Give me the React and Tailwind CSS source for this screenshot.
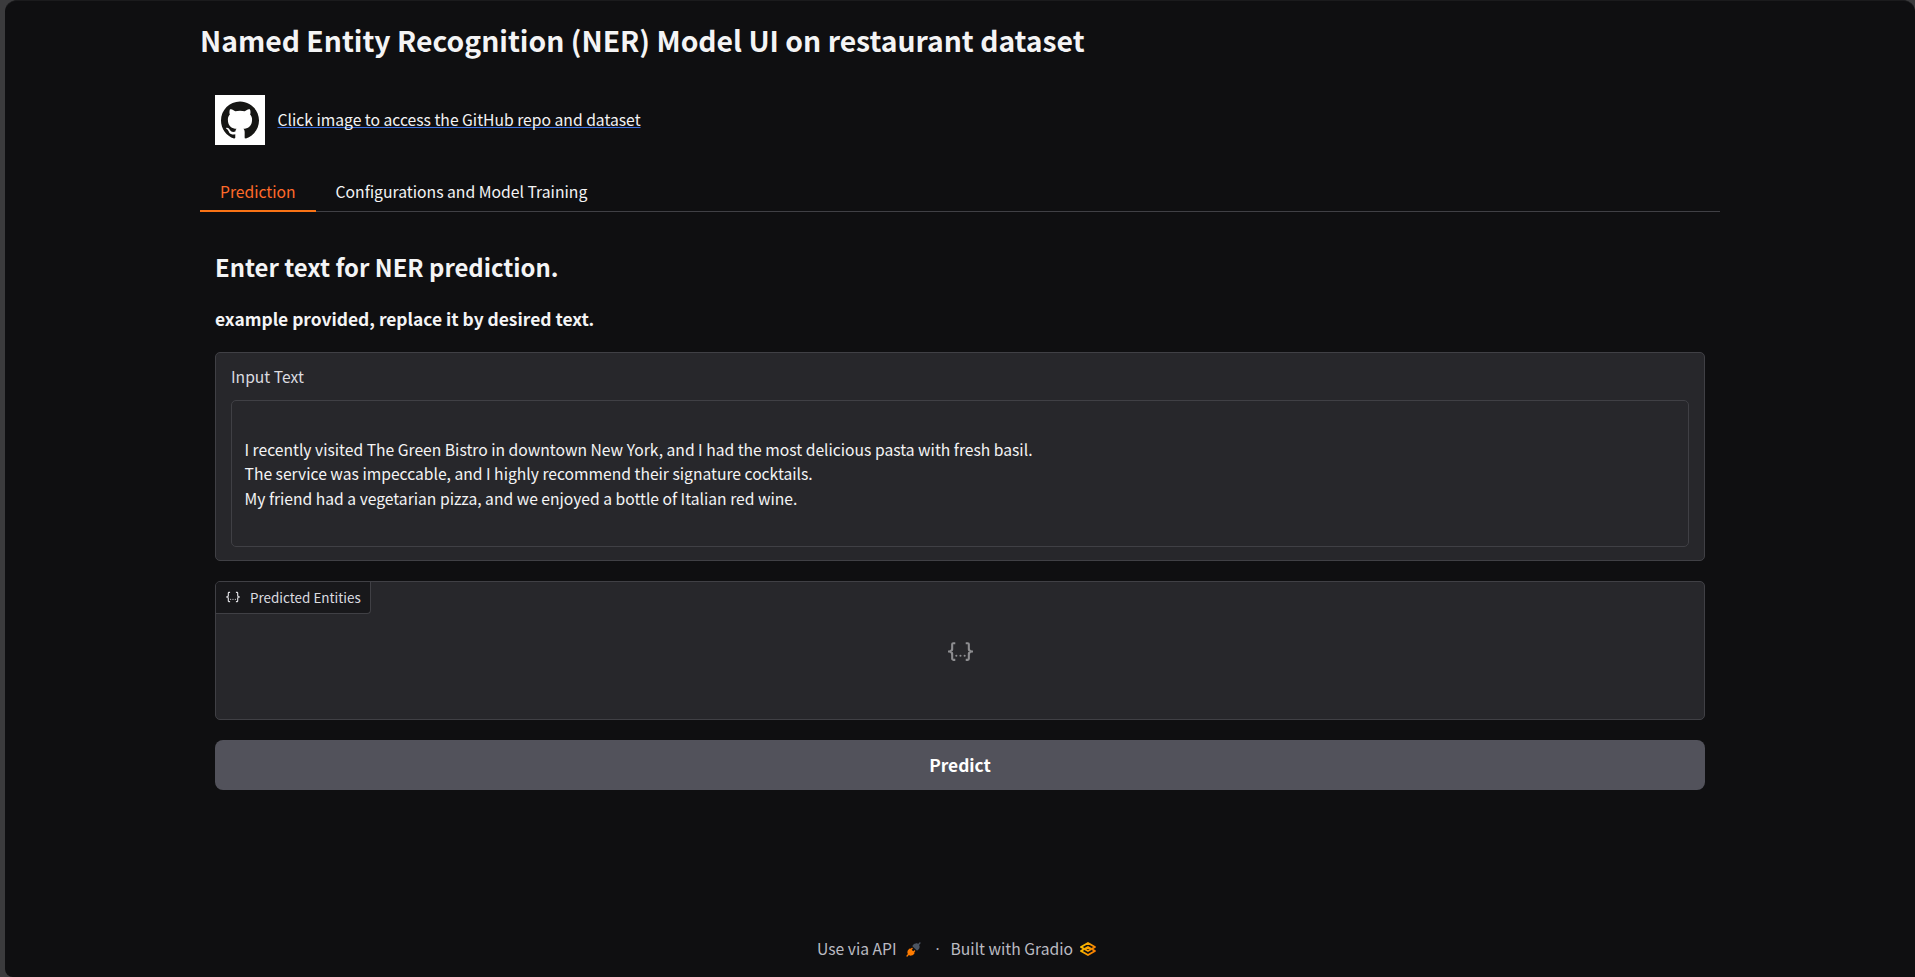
import { SiGithub } from 'react-icons/si';

const SAMPLE_TEXT = `
I recently visited The Green Bistro in downtown New York, and I had the most delicious pasta with fresh basil.
The service was impeccable, and I highly recommend their signature cocktails.
My friend had a vegetarian pizza, and we enjoyed a bottle of Italian red wine.
`;

function JsonIcon({ className }) {
  return (
    <svg viewBox="0 0 24 24" fill="currentColor" className={className}>
      <path d="M5 3h2v2H5v5a2 2 0 0 1-2 2a2 2 0 0 1 2 2v5h2v2H5c-1.07-.27-2-.9-2-2v-4a2 2 0 0 0-2-2H0v-2h1a2 2 0 0 0 2-2V5a2 2 0 0 1 2-2m14 0a2 2 0 0 1 2 2v4a2 2 0 0 0 2 2h1v2h-1a2 2 0 0 0-2 2v4a2 2 0 0 1-2 2h-2v-2h2v-5a2 2 0 0 1 2-2a2 2 0 0 1-2-2V5h-2V3h2m-7 12a1 1 0 0 1 1 1a1 1 0 0 1-1 1a1 1 0 0 1-1-1a1 1 0 0 1 1-1m-4 0a1 1 0 0 1 1 1a1 1 0 0 1-1 1a1 1 0 0 1-1-1a1 1 0 0 1 1-1m8 0a1 1 0 0 1 1 1a1 1 0 0 1-1 1a1 1 0 0 1-1-1a1 1 0 0 1 1-1Z" />
    </svg>
  );
}

function PlugIcon({ className }) {
  return (
    <svg viewBox="0 0 28 28" className={className}>
      <path
        fill="#4b5563"
        d="M26.9425 2.94265C27.4632 2.42195 27.4632 1.57773 26.9425 1.05703C26.4218 0.536329 25.5776 0.536329 25.0569 1.05703L22.5713 3.54256C21.1213 2.59333 19.5367 2.43378 18.1753 2.64006C16.5495 2.88638 15.1127 3.66838 14.3905 4.39053L12.3905 6.39053C12.1405 6.64058 12 6.97972 12 7.33334C12 7.68697 12.1405 8.0261 12.3905 8.27615L19.7239 15.6095C20.2446 16.1302 21.0888 16.1302 21.6095 15.6095L23.6095 13.6095C24.3316 12.8873 25.1136 11.4505 25.36 9.82475C25.5663 8.46312 25.4066 6.87827 24.4571 5.42807L26.9425 2.94265Z"
      />
      <path
        fill="#FF7C00"
        d="M12.276 12.9426C12.7967 12.4219 12.7967 11.5777 12.276 11.057C11.7553 10.5363 10.9111 10.5363 10.3904 11.057L8.66651 12.7809L8.27615 12.3905C8.0261 12.1405 7.68697 12 7.33334 12C6.97972 12 6.64058 12.1405 6.39053 12.3905L4.39053 14.3905C3.66838 15.1127 2.88638 16.5495 2.64006 18.1753C2.43377 19.5367 2.59333 21.1214 3.54262 22.5714L1.05703 25.057C0.536329 25.5777 0.536329 26.4219 1.05703 26.9426C1.57773 27.4633 2.42195 27.4633 2.94265 26.9426L5.42817 24.4571C6.87835 25.4066 8.46315 25.5663 9.82475 25.36C11.4505 25.1136 12.8873 24.3316 13.6095 23.6095L15.6095 21.6095C15.8596 21.3595 16 21.0203 16 20.6667C16 20.3131 15.8596 19.9739 15.6095 19.7239L15.2188 19.3332L16.9426 17.6093C17.4633 17.0886 17.4633 16.2444 16.9426 15.7237C16.4219 15.203 15.5777 15.203 15.057 15.7237L13.3332 17.4475L10.5521 14.6665L12.276 12.9426Z"
      />
    </svg>
  );
}

function GradioIcon({ className }) {
  return (
    <svg viewBox="0 0 576 576" fill="none" stroke="url(#gradio)" strokeWidth="54" strokeLinejoin="round" className={className}>
      <path d="M170 296L86 344.5L287.5 460L489 344.5L405 296" />
      <path d="M287.5 116L86 231.5L287.5 347L489 231.5L287.5 116Z" />
      <path d="M200 280L288 229L376 280" />
      <defs>
        <linearGradient id="gradio" x1="60" y1="200" x2="520" y2="380" gradientUnits="userSpaceOnUse">
          <stop stopColor="#F9C500" />
          <stop offset="1" stopColor="#F97700" />
        </linearGradient>
      </defs>
    </svg>
  );
}

export default function App() {
  return (
    <div className="h-[977px] overflow-hidden bg-[#3b3b3d] pl-[5px] font-['Noto_Sans_CJK_SC','Noto_Sans',sans-serif] text-[15.66px] text-[#f4f4f5]">
      <div className="h-full rounded-t-[12px] rounded-bl-[8px] border-t border-[#1b1b1d] bg-[#0f0f11] pl-[195px]">
        <main className="flex h-full w-[1520px] flex-col">
          <h1 className="mt-[19px] h-10 text-[28.32px] leading-[40px] font-bold whitespace-nowrap">
            Named Entity Recognition (NER) Model UI on restaurant dataset
          </h1>

          <a className="mt-[35px] ml-[15px] flex h-[50px] items-center gap-[12.5px]">
            <span className="flex size-[50px] items-center justify-center bg-white">
              <SiGithub className="size-[38px] text-[#161614]" />
            </span>
            <span className="h-6 leading-6 text-[15.68px] underline decoration-[#3b6fe0] decoration-1 underline-offset-1 [text-decoration-skip-ink:none]">
              Click image to access the GitHub repo and dataset
            </span>
          </a>

          <nav className="mt-[26px] flex h-[41px] border-b border-[#404045] leading-[41px]">
            <button className="h-[41px] w-[116px] border-b-2 border-[#f97316] pl-5 text-left text-[15.66px] leading-[41px] text-[#ff6a2a]">Prediction</button>
            <button className="h-[40px] pl-[19.5px] text-left text-[15.73px] leading-[41px]">Configurations and Model Training</button>
          </nav>

          <section className="mx-[15px] flex flex-col">
            <h2 className="mt-[35px] h-10 text-[23.87px] leading-10 font-bold">Enter text for NER prediction.</h2>
            <h3 className="mt-[17px] h-[30px] text-[17.4px] leading-[30px] font-bold">example provided, replace it by desired text.</h3>

            <div className="mt-[18px] h-[209px] rounded-[5px] border border-[#404045] bg-[#27272b] px-[15px] pt-3">
              <div className="h-[35px] leading-[24px] text-[#dcdce0]">Input Text</div>
              <div className="h-[147px] rounded-[5px] border border-[#404045] px-[12.5px] pt-3 leading-[24.5px] whitespace-pre">
                {SAMPLE_TEXT}
              </div>
            </div>

            <div className="mt-5 flex h-[139px] flex-col rounded-[5px] border border-[#404045] bg-[#27272b]">
              <div className="flex h-8 w-[155px] items-center rounded-tl-[4px] rounded-br-[4px] border-r border-b border-[#404045] bg-[#18181b] pl-[10px] text-[13.45px] text-[#dcdce0]">
                <JsonIcon className="mr-[10px] size-[14px] -mt-px" />
                <span className="pb-[2px] leading-[30px] whitespace-nowrap">Predicted Entities</span>
              </div>
              <div className="flex justify-center pt-[25px] text-[#8d8d90]">
                <JsonIcon className="size-[25px]" />
              </div>
            </div>

            <button className="mt-5 h-[50px] rounded-[8px] bg-[#52525b] text-[17.35px] leading-[50px] font-bold text-white">Predict</button>
          </section>

          <footer className="mt-[146px] flex h-[26px] items-center pl-[617px] leading-[26px] text-[#bbbbc2]">
            <span>Use via API</span>
            <PlugIcon className="ml-[9px] size-[15px]" />
            <span className="ml-[15px] w-[5px] font-['Open_Sans',sans-serif]">·</span>
            <span className="ml-[10px]">Built with Gradio</span>
            <GradioIcon className="ml-[5px] size-5" />
          </footer>
        </main>
      </div>
    </div>
  );
}
